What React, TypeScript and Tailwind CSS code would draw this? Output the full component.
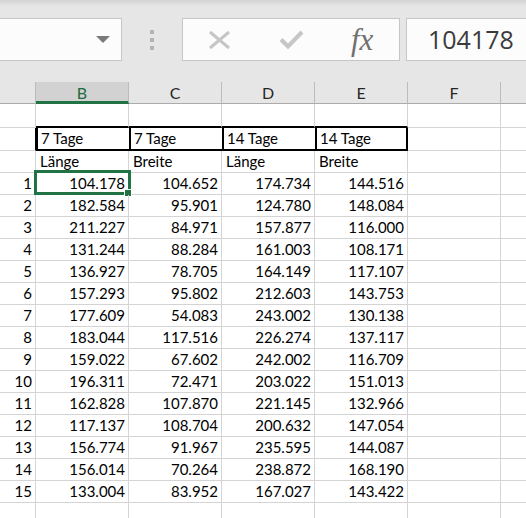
import React from 'react';

const colB = ['104.178', '182.584', '211.227', '131.244', '136.927', '157.293', '177.609', '183.044', '159.022', '196.311', '162.828', '117.137', '156.774', '156.014', '133.004'];
const colC = ['104.652', '95.901', '84.971', '88.284', '78.705', '95.802', '54.083', '117.516', '67.602', '72.471', '107.870', '108.704', '91.967', '70.264', '83.952'];
const colD = ['174.734', '124.780', '157.877', '161.003', '164.149', '212.603', '243.002', '226.274', '242.002', '203.022', '221.145', '200.632', '235.595', '238.872', '167.027'];
const colE = ['144.516', '148.084', '116.000', '108.171', '117.107', '143.753', '130.138', '137.117', '116.709', '151.013', '132.966', '147.054', '144.087', '168.190', '143.422'];

const line = 'border-[#d4d4d4]';

export default function App() {
  return (
    <div className="h-[518px] w-[526px] overflow-hidden bg-white font-['Lato',sans-serif] text-[15px] text-black">
      {/* Formula bar */}
      <div className="h-[82px] bg-[#e6e6e6]">
        <div className="h-[6px] bg-gradient-to-b from-[#d2d2d2] to-[#e6e6e6]" />
        <div className="mt-[12px] flex h-[43px]">
          {/* Name box */}
          <div className="flex w-[122px] shrink-0 items-center justify-end border border-l-0 border-[#c6c6c6] bg-[#fcfcfc] pr-[11px]">
            <svg width="14" height="7" viewBox="0 0 14 7">
              <path d="M0 0h14L7 7z" fill="#7a7a7a" />
            </svg>
          </div>
          <div className="flex w-[60px] shrink-0 flex-col items-center justify-center gap-[4px]">
            <div className="h-[4px] w-[4px] bg-[#b4b4b4]" />
            <div className="h-[4px] w-[4px] bg-[#b4b4b4]" />
            <div className="h-[4px] w-[4px] bg-[#b4b4b4]" />
          </div>
          {/* Cancel / Enter / fx */}
          <div className="flex w-[218px] shrink-0 items-center border border-[#c6c6c6] bg-[#fcfcfc] pl-[25px]">
            <svg width="23" height="20" viewBox="0 0 23 20">
              <path d="M2 2L21 18M21 2L2 18" stroke="#c6c6c6" strokeWidth="3" fill="none" />
            </svg>
            <svg width="25" height="19" viewBox="0 0 25 19" className="ml-[48px]">
              <path d="M2 9.5L9 16.5L23 2" stroke="#c6c6c6" strokeWidth="4" fill="none" />
            </svg>
            <span className="ml-[47px] font-['Liberation_Serif',serif] text-[31px] italic leading-none text-[#707070]">fx</span>
          </div>
          {/* Formula input */}
          <div className="ml-[6px] flex flex-1 items-center border border-r-0 border-[#c6c6c6] bg-[#fcfcfc] pl-[21px]">
            <span className="font-['Open_Sans',sans-serif] text-[25px] leading-none text-[#3b3b3b]">104178</span>
          </div>
        </div>
      </div>

      {/* Column headers */}
      <div className="flex h-[22px] bg-[#e6e6e6] text-[16px] leading-none">
        <div className="w-[36px] shrink-0 border-r border-b border-r-[#bcbcbc] border-b-[#ababab]" />
        <div className="flex w-[93px] shrink-0 items-center justify-center border-r border-b-[3px] border-r-[#bcbcbc] border-b-[#217346] bg-[#d2d2d2] pt-[2px] text-[#1e6b40]">B</div>
        {['C', 'D', 'E', 'F'].map((l) => (
          <div key={l} className="flex w-[93px] shrink-0 items-center justify-center border-r border-b border-r-[#bcbcbc] border-b-[#ababab] text-[#262626]">
            {l}
          </div>
        ))}
        <div className="flex-1 border-b border-b-[#ababab]" />
      </div>

      {/* Blank row with top of the boxed header */}
      <div className="flex h-[24px]">
        <div className={`w-[36px] shrink-0 border-r border-b ${line}`} />
        {['B', 'C', 'D', 'E'].map((l) => (
          <div key={l} className="w-[93px] shrink-0 border-r border-r-[#d4d4d4] border-b-2 border-b-black" />
        ))}
        <div className={`w-[93px] shrink-0 border-r border-b ${line}`} />
        <div className={`flex-1 border-b ${line}`} />
      </div>

      {/* Boxed row */}
      <div className="flex h-[23px] leading-[21px]">
        <div className="w-[36px] shrink-0 border-r border-b border-r-black border-b-[#d4d4d4]" />
        <div className="w-[93px] shrink-0 border-l-2 border-b-2 border-black pl-[3px]">7 Tage</div>
        <div className="w-[93px] shrink-0 border-l-2 border-b-2 border-black pl-[3px]">7 Tage</div>
        <div className="w-[93px] shrink-0 border-l-2 border-b-2 border-black pl-[3px]">14 Tage</div>
        <div className="w-[93px] shrink-0 border-x-2 border-b-2 border-black pl-[3px]">14 Tage</div>
        <div className={`w-[93px] shrink-0 border-r border-b ${line}`} />
        <div className={`flex-1 border-b ${line}`} />
      </div>

      {/* Sub header row */}
      <div className="flex h-[22px] leading-[21px]">
        <div className={`w-[36px] shrink-0 border-r border-b ${line}`} />
        {['Länge', 'Breite', 'Länge', 'Breite'].map((t, i) => (
          <div key={i} className={`w-[93px] shrink-0 border-r border-b ${line} pl-[4px]`}>{t}</div>
        ))}
        <div className={`w-[93px] shrink-0 border-r border-b ${line}`} />
        <div className={`flex-1 border-b ${line}`} />
      </div>

      {/* Data rows */}
      {colB.map((b, i) => (
        <div key={i} className="flex h-[22px] leading-[21px]">
          <div className={`w-[36px] shrink-0 border-r border-b ${line} pr-[3px] text-right`}>{i + 1}</div>
          <div className={`relative w-[93px] shrink-0 border-r border-b ${line} pr-[3px] text-right`}>
            {b}
            {i === 0 && (
              <div className="absolute -top-[3px] -right-[3px] -bottom-[1px] -left-[2px] border-[3px] border-[#217346]">
                <div className="absolute -right-[4px] -bottom-[5px] h-[8px] w-[8px] border border-white bg-[#217346]" />
              </div>
            )}
          </div>
          <div className={`w-[93px] shrink-0 border-r border-b ${line} pr-[3px] text-right`}>{colC[i]}</div>
          <div className={`w-[93px] shrink-0 border-r border-b ${line} pr-[3px] text-right`}>{colD[i]}</div>
          <div className={`w-[93px] shrink-0 border-r border-b ${line} pr-[3px] text-right`}>{colE[i]}</div>
          <div className={`w-[93px] shrink-0 border-r border-b ${line}`} />
          <div className={`flex-1 border-b ${line}`} />
        </div>
      ))}

      {/* Trailing empty row */}
      <div className="flex h-[22px]">
        <div className={`w-[36px] shrink-0 border-r border-b ${line}`} />
        {[0, 1, 2, 3, 4].map((k) => (
          <div key={k} className={`w-[93px] shrink-0 border-r border-b ${line}`} />
        ))}
        <div className={`flex-1 border-b ${line}`} />
      </div>
    </div>
  );
}
